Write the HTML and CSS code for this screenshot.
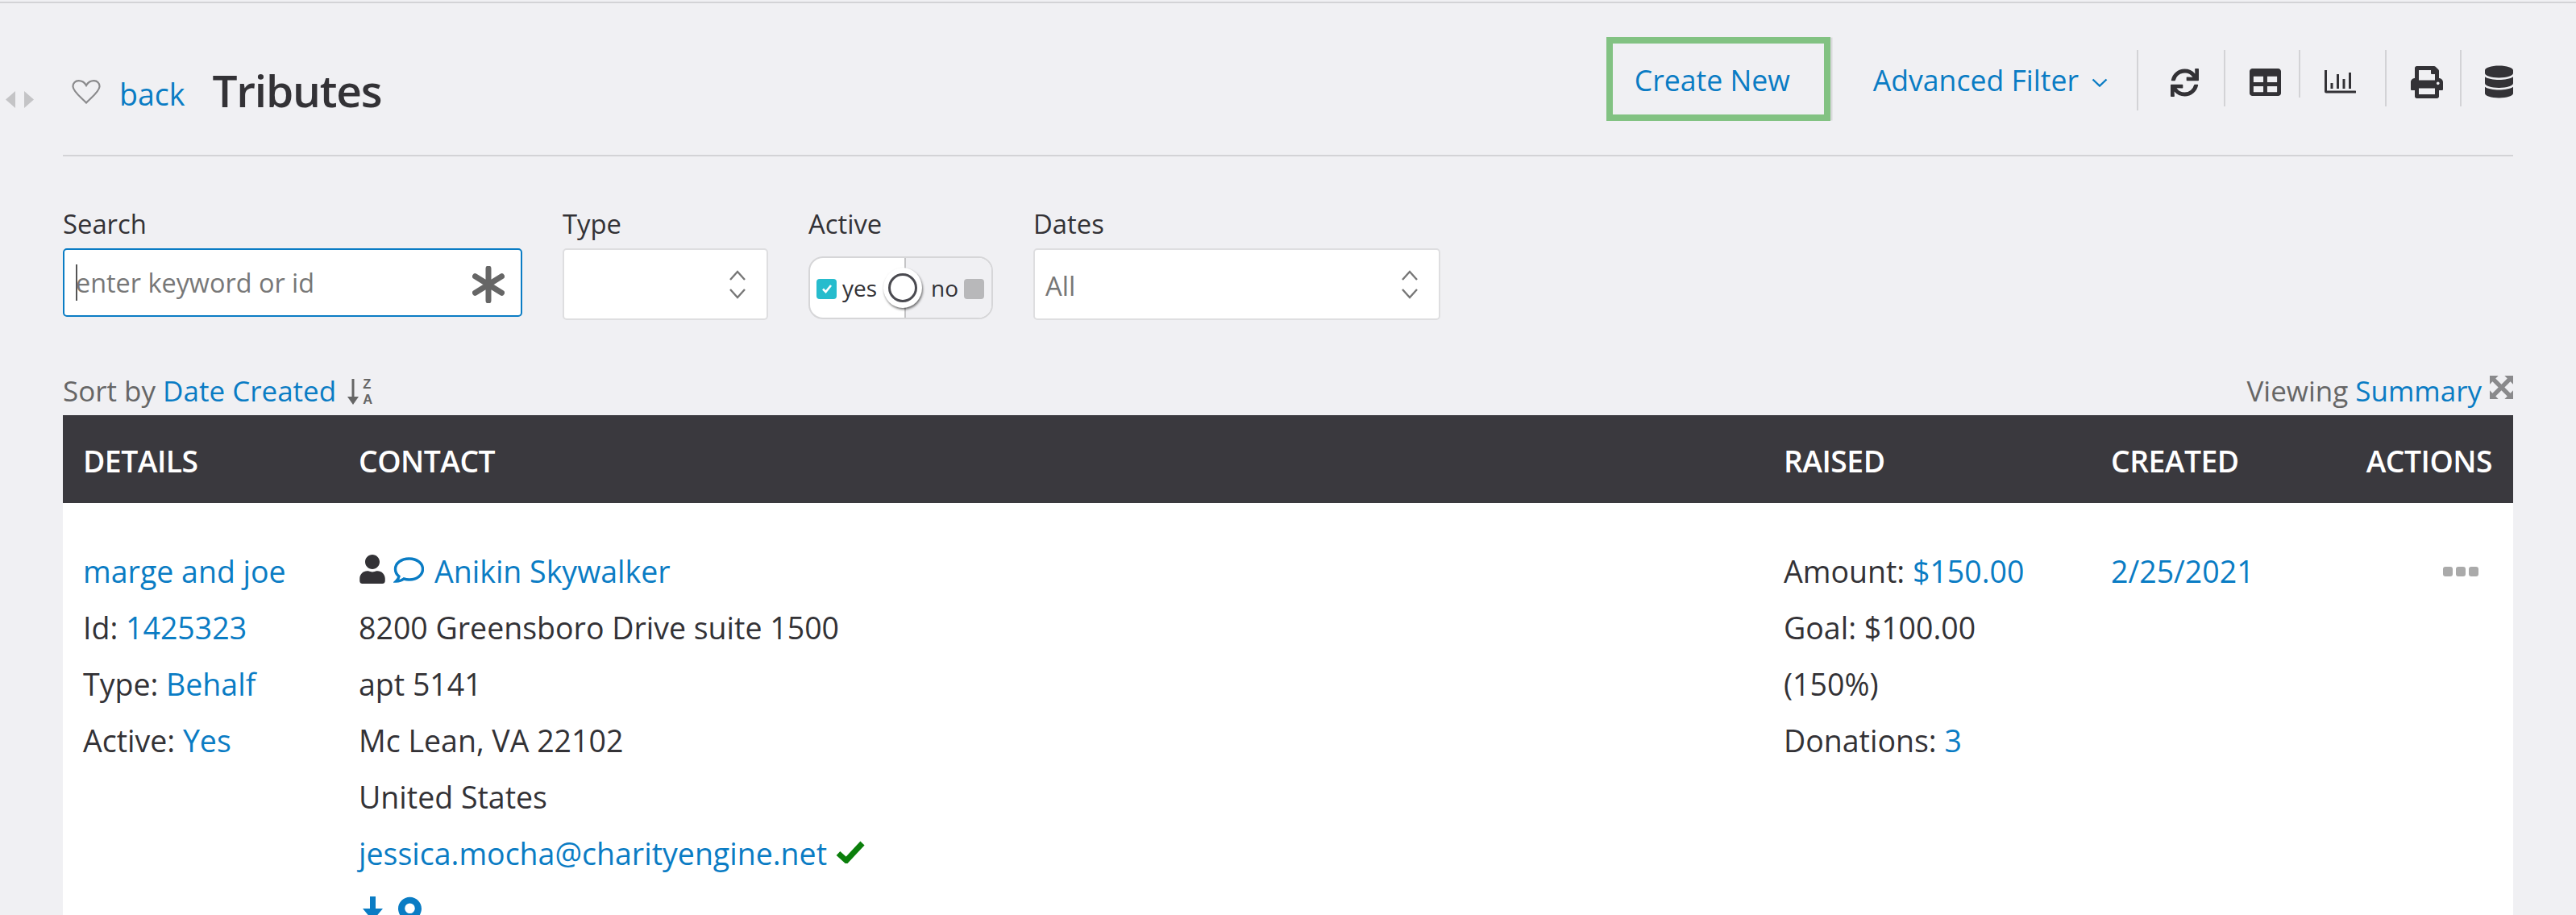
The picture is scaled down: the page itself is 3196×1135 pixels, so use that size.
FILE: index.html
```html
<!DOCTYPE html>
<html lang="en">
<head>
<meta charset="utf-8">
<title>Tributes</title>
<link rel="stylesheet" href="styles.css">
</head>
<body>
<div class="page">
  <aside class="rail">
    <svg class="rail-arrows" viewBox="0 0 35 21"><path d="M12 0v21L0 10.500z"/><path d="M23 0v21l12-10.500z"/></svg>
  </aside>
  <main class="main">
    <header class="head">
      <div class="head-left">
        <svg class="heart" viewBox="0 0 36 30"><path d="M18 28.500C12 22 2 15 1.500 8.500 1.200 4 4.500 1.200 8.500 1.200c4 0 7.500 2.300 9.500 5.800 2-3.500 5.500-5.800 9.500-5.800 4 0 7.300 2.800 7 7.300C34 15 24 22 18 28.500z"/></svg>
        <a class="link back">back</a>
        <h1 class="title">Tributes</h1>
      </div>
      <div class="head-right">
        <a class="link create">Create New</a>
        <a class="link advanced">Advanced Filter<svg class="adv-chevron" viewBox="0 0 20 11"><path d="M1.500 1.500 10 9.500l8.500-8"/></svg></a>
        <div class="tool tool-refresh">
          <svg class="ico-refresh" viewBox="0 0 512 512"><path d="M440.65 12.57l4 82.77A247.16 247.16 0 0 0 255.83 8C134.73 8 33.91 94.92 12.29 209.82A12 12 0 0 0 24.09 224h49.05a12 12 0 0 0 11.67-9.26 175.91 175.91 0 0 1 317-56.94l-101.46-4.86a12 12 0 0 0-12.57 12v47.41a12 12 0 0 0 12 12H500a12 12 0 0 0 12-12V12a12 12 0 0 0-12-12h-47.37a12 12 0 0 0-11.98 12.57zM255.83 432a175.61 175.61 0 0 1-146-77.8l101.8 4.87a12 12 0 0 0 12.57-12v-47.4a12 12 0 0 0-12-12H12a12 12 0 0 0-12 12V500a12 12 0 0 0 12 12h47.35a12 12 0 0 0 12-12.6l-4.15-82.57A247.17 247.17 0 0 0 255.83 504c121.11 0 221.93-86.92 243.55-201.82a12 12 0 0 0-11.8-14.18h-49.05a12 12 0 0 0-11.67 9.26A175.86 175.86 0 0 1 255.83 432z"/></svg>
        </div>
        <div class="tool tool-table">
          <svg class="ico-table" viewBox="0 32 512 448"><path d="M464 32H48C21.49 32 0 53.49 0 80v352c0 26.51 21.49 48 48 48h416c26.51 0 48-21.49 48-48V80c0-26.51-21.49-48-48-48zM224 416H64v-96h160v96zm0-160H64v-96h160v96zm224 160H288v-96h160v96zm0-160H288v-96h160v96z"/></svg>
        </div>
        <div class="tool tool-chart">
          <svg class="ico-chart" viewBox="0 0 40 30"><path d="M1 0v26.500a2 2 0 0 0 2 2h36a1.200 1.200 0 0 0 0-3H4V1a1.500 1.500 0 0 0-3-1zM8.500 16h3v7h-3zM16 5h3v18h-3zM23.500 11h3v12h-3zM31 3h3v20h-3z"/></svg>
        </div>
        <div class="tool tool-print">
          <svg class="ico-print" viewBox="0 0 512 512"><path d="M448 192V77.25c0-8.49-3.37-16.62-9.37-22.63L393.37 9.370c-6-6-14.14-9.370-22.63-9.370H96C78.330 0 64 14.330 64 32v160c-35.350 0-64 28.650-64 64v112c0 8.840 7.160 16 16 16h48v96c0 17.670 14.330 32 32 32h320c17.670 0 32-14.330 32-32v-96h48c8.840 0 16-7.160 16-16V256c0-35.350-28.650-64-64-64zm-64 256H128v-96h256v96zm0-224H128V64h192v48c0 8.840 7.160 16 16 16h48v96zm48 72c-13.250 0-24-10.750-24-24 0-13.260 10.750-24 24-24s24 10.740 24 24c0 13.250-10.750 24-24 24z"/></svg>
        </div>
        <div class="tool tool-db">
          <svg class="ico-db" viewBox="0 0 448 512"><path d="M448 73.143v45.714C448 159.143 347.667 192 224 192S0 159.143 0 118.857V73.143C0 32.857 100.333 0 224 0s224 32.857 224 73.143zM448 176v102.857C448 319.143 347.667 352 224 352S0 319.143 0 278.857V176c48.125 33.143 136.208 48.572 224 48.572S399.874 209.143 448 176zm0 160v102.857C448 479.143 347.667 512 224 512S0 479.143 0 438.857V336c48.125 33.143 136.208 48.572 224 48.572S399.874 369.143 448 336z"/></svg>
        </div>
      </div>
    </header>

    <section class="filters">
      <div class="field field-search">
        <label class="label">Search</label>
        <div class="search-box">
          <span class="caret"></span>
          <input class="search-input" type="text" placeholder="enter keyword or id">
          <svg class="asterisk" viewBox="0 0 40 46"><path d="M20 3v40M3.500 12.800l33 20.400M36.500 12.800l-33 20.400"/></svg>
        </div>
      </div>
      <div class="field field-type">
        <label class="label">Type</label>
        <div class="select">
          <span class="select-value"></span>
          <svg class="updown" viewBox="0 0 20 36"><path d="M1 12 10 2l9 10M1 24l9 10 9-10"/></svg>
        </div>
      </div>
      <div class="field field-active">
        <label class="label">Active</label>
        <div class="toggle">
          <div class="toggle-half toggle-yes">
            <span class="tick"><svg class="tick-mark" viewBox="0 0 14 12"><path d="M2 6.500 5.500 10 12 2"/></svg></span>
            <span>yes</span>
          </div>
          <div class="toggle-half toggle-no">
            <span>no</span>
            <span class="untick"></span>
          </div>
          <span class="knob"><span class="knob-ring"></span></span>
        </div>
      </div>
      <div class="field field-dates">
        <label class="label">Dates</label>
        <div class="select">
          <span class="select-value">All</span>
          <svg class="updown" viewBox="0 0 20 36"><path d="M1 12 10 2l9 10M1 24l9 10 9-10"/></svg>
        </div>
      </div>
    </section>

    <section class="sortbar">
      <div class="sort-left">
        <span>Sort by</span>
        <a class="link">Date Created</a>
        <span class="sort-icon">
          <svg class="sort-arrow" viewBox="0 0 14 32"><path d="M5.500 0h3v22H14l-7 10-7-10h5.500z"/></svg>
          <span class="sort-letters"><span>Z</span><span>A</span></span>
        </span>
      </div>
      <div class="sort-right">
        <span>Viewing</span>
        <a class="link">Summary</a>
        <svg class="expand" viewBox="0 0 30 30"><path d="M0 0h11L7.500 3.500 15 11l7.500-7.500L19 0h11v11l-3.500-3.500L19 15l7.500 7.500L30 19v11H19l3.500-3.500L15 19l-7.500 7.500L11 30H0V19l3.500 3.500L11 15 3.500 7.500 0 11z"/></svg>
      </div>
    </section>

    <table class="grid">
      <colgroup>
        <col class="col-details"><col class="col-contact"><col class="col-raised"><col class="col-created"><col class="col-actions">
      </colgroup>
      <thead>
        <tr><th>DETAILS</th><th>CONTACT</th><th>RAISED</th><th>CREATED</th><th class="th-actions">ACTIONS</th></tr>
      </thead>
      <tbody>
        <tr>
          <td>
            <div class="line"><a class="link">marge and joe</a></div>
            <div class="line">Id: <a class="link">1425323</a></div>
            <div class="line">Type: <a class="link">Behalf</a></div>
            <div class="line">Active: <a class="link">Yes</a></div>
          </td>
          <td>
            <div class="line line-name">
              <svg class="ico-user" viewBox="0 0 448 512"><path d="M224 256c70.700 0 128-57.300 128-128S294.700 0 224 0 96 57.300 96 128s57.300 128 128 128zm89.600 32h-16.700c-22.200 10.200-46.900 16-72.900 16s-50.600-5.800-72.900-16h-16.700C60.200 288 0 348.200 0 422.400V464c0 26.500 21.500 48 48 48h352c26.500 0 48-21.500 48-48v-41.600c0-74.200-60.200-134.400-134.400-134.400z"/></svg>
              <svg class="ico-bubble" viewBox="0 0 38 32"><path d="M19.500 2C10 2 2.500 7.500 2.500 15c0 3.500 1.800 6.800 4.500 9-.3 2-1.500 4-3.500 6 3.500 0 7-1 9.500-3 2 .6 4.300 1 6.500 1 9.500 0 17-5.500 17-13S29 2 19.500 2z"/></svg>
              <a class="link">Anikin Skywalker</a>
            </div>
            <div class="line">8200 Greensboro Drive suite 1500</div>
            <div class="line">apt 5141</div>
            <div class="line">Mc Lean, VA 22102</div>
            <div class="line">United States</div>
            <div class="line line-email">
              <a class="link">jessica.mocha@charityengine.net</a>
              <svg class="ico-check" viewBox="0 0 36 28"><path d="M3 15.500 13 24.500 33 3"/></svg>
            </div>
            <div class="line line-tools">
              <svg class="ico-down" viewBox="0 0 25 30"><path d="M9 0h7v15h9L12.500 30 0 15h9z"/></svg>
              <svg class="ico-pin" viewBox="0 0 30 40"><path d="M15 0C6.700 0 0 6.700 0 15c0 8 9 19 15 25 6-6 15-17 15-25C30 6.700 23.300 0 15 0zm0 21a6.500 6.500 0 1 1 0-13 6.500 6.500 0 0 1 0 13z"/></svg>
            </div>
          </td>
          <td>
            <div class="line">Amount: <a class="link">$150.00</a></div>
            <div class="line">Goal: $100.00</div>
            <div class="line">(150%)</div>
            <div class="line">Donations: <a class="link">3</a></div>
          </td>
          <td>
            <div class="line"><a class="link">2/25/2021</a></div>
          </td>
          <td class="td-actions">
            <div class="line dots"><span class="dot"></span><span class="dot"></span><span class="dot"></span></div>
          </td>
        </tr>
      </tbody>
    </table>
  </main>
</div>
</body>
</html>
```
FILE: styles.css
```css
* { box-sizing: border-box; }
html, body { margin: 0; height: 100%; overflow: hidden; }
body {
  background: #f0f0f3;
  color: #333236;
  font-family: "Open Sans", "Liberation Sans", sans-serif;
  font-size: 37.5px;
}
a { cursor: pointer; }
.link { color: #0a7cc4; }

.page { display: flex; height: 1135px; margin-top: 2px; border-top: 2px solid #d3d3d6; }
.rail { flex: 0 0 78px; padding: 109px 0 0 7px; }
.rail-arrows { display: block; width: 35px; height: 21px; fill: #c4c4c6; }
.main { flex: 1 1 auto; min-width: 0; margin-right: 78px; }

/* header */
.head { display: flex; justify-content: space-between; height: 190px; border-bottom: 2px solid #d3d3d6; }
.head-left { display: flex; align-items: flex-start; padding: 68px 0 0 11px; }
.heart { width: 36px; height: 30px; margin: 27px 23px 0 0; fill: none; stroke: #8a8a8c; stroke-width: 2.200; }
.back { line-height: 76px; padding-top: 7px; margin-right: 34px; }
.title { margin: 0; padding-top: 2px; font-size: 55px; font-weight: 600; letter-spacing: -1.2px; line-height: 76px; color: #333236; }

.head-right { display: flex; align-items: flex-start; font-size: 35.6px; }
.create {
  display: flex; align-items: center;
  width: 278px; height: 104px; margin-top: 42px; padding: 2px 0 0 27px;
  border: 8px solid #82c282;
  box-shadow: 3px 0 0 -0.5px #d8d8da;
}
.advanced { display: flex; align-items: center; height: 104px; margin: 42px 36px 0 53px; padding-top: 2px; }
.adv-chevron { width: 20px; height: 11px; margin: 7px 0 0 16px; fill: none; stroke: #0a7cc4; stroke-width: 2.400; }

.tool { margin-top: 58px; border-left: 2px solid #d3d3d6; height: 70px; fill: #333236; }
.tool svg { display: block; }
.tool-refresh { width: 108px; height: 75px; padding: 23px 0 0 40px; }
.tool-table { width: 93px; padding: 22px 0 0 30px; }
.tool-chart { width: 107px; height: 59px; padding: 25px 0 0 29px; }
.tool-print { width: 93px; padding: 20px 0 0 30px; }
.tool-db { width: 66px; padding: 19px 0 0 29px; }
.ico-refresh { width: 35px; height: 35px; }
.ico-table { width: 39px; height: 36px; }
.ico-chart { width: 40px; height: 30px; }
.ico-print { width: 40px; height: 40px; }
.ico-db { width: 35px; height: 41px; }

/* filters */
.filters { display: flex; gap: 50px; padding-top: 64px; font-size: 32.8px; }
.label { display: block; height: 50px; line-height: 40px; }
.field-search { width: 570px; }
.field-type { width: 255px; }
.field-active { width: 229px; }
.field-dates { width: 505px; }

.search-box {
  display: flex; align-items: center;
  height: 85px; padding: 0 20px 0 14px;
  background: #fff; border: 2px solid #0a7cc4; border-radius: 5px;
}
.caret { flex: none; width: 2px; height: 45px; background: #555; }
.search-input {
  flex: 1 1 auto; min-width: 0; height: 60px; padding: 0 0 2px;
  border: 0; outline: 0; background: transparent;
  font: inherit; font-size: 32.4px; color: #333; margin-left: -2px;
}
.search-input::placeholder { color: #777; opacity: 1; }
.asterisk { flex: none; width: 40px; height: 46px; margin-top: 4px; fill: none; stroke: #666; stroke-width: 7; stroke-linecap: round; }

.select {
  display: flex; align-items: center; justify-content: space-between;
  height: 89px; padding: 4px 26px 0 13px;
  background: #fff; border: 2px solid #dedee0; border-radius: 5px;
  color: #777;
}
.updown { width: 20px; height: 36px; margin-top: -4px; fill: none; stroke: #777; stroke-width: 2.400; }

.toggle {
  position: relative; display: flex;
  height: 78px; margin-top: 10px;
  background: #fff; border: 2px solid #d6d6d8; border-radius: 18px;
  font-size: 28px; color: #333236; overflow: visible;
}
.toggle-half { display: flex; align-items: center; height: 100%; }
.toggle-yes { width: 119px; gap: 7px; padding: 0 0 0 8px; border-right: 2px solid #c4c4c6; }
.toggle-no { flex: 1; gap: 7px; padding: 0 0 0 31px; background: #f0f0f3; border-radius: 0 16px 16px 0; }
.tick {
  display: flex; align-items: center; justify-content: center;
  width: 25px; height: 25px; margin-top: 2px;
  background: #26bccd; border-radius: 4px;
}
.tick-mark { width: 14px; height: 12px; fill: none; stroke: #fff; stroke-width: 2.600; }
.untick { width: 25px; height: 25px; margin-top: 2px; background: #b8b8ba; border-radius: 4px; }
.knob {
  position: absolute; left: 91px; top: 12px;
  display: flex; align-items: center; justify-content: center;
  width: 48px; height: 50px;
  background: #fff; border-radius: 50%;
  box-shadow: 1px 2px 3px rgba(0,0,0,.55);
}
.knob-ring { width: 36px; height: 36px; border: 3px solid #4a4a50; border-radius: 50%; }

/* sort bar */
.sortbar { display: flex; justify-content: space-between; margin-top: 68px; height: 50px; font-size: 35px; line-height: 40px; color: #666; }
.sort-left, .sort-right { display: flex; gap: 9px; height: 40px; }
.sort-icon { display: flex; gap: 5px; margin-left: 5px; padding-top: 5px; }
.sort-arrow { width: 14px; height: 32px; fill: #666; }
.sort-letters {
  display: flex; flex-direction: column; width: 14px; margin-top: -3px;
  font-family: "Liberation Sans", sans-serif; font-size: 16.5px; line-height: 19px; font-weight: 700;
}
.expand { width: 29px; height: 29px; margin: 1px 0 0 1px; fill: #8a8a8c; }

/* table */
.grid { width: 100%; table-layout: fixed; border-collapse: collapse; background: #fff; }
.col-details { width: 342px; }
.col-contact { width: 1768px; }
.col-raised { width: 406px; }
.col-created { width: 300px; }
.grid th {
  height: 109px; padding: 4px 0 0 25px;
  background: #3a393e; color: #fff;
  font-size: 37.3px; font-weight: 600; text-align: left; letter-spacing: -0.5px;
}
.grid .th-actions { padding: 4px 26px 0 0; text-align: right; }
.grid td { vertical-align: top; padding: 50px 0 0 25px; }
.grid .td-actions { padding-left: 0; }
.line { height: 70px; line-height: 70px; white-space: nowrap; }
.line-name { display: flex; align-items: center; }
.ico-user { width: 32px; height: 36px; margin: -6px 10px 0 1px; fill: #333236; }
.ico-bubble { width: 38px; height: 32px; margin: -4px 13px 0 0; fill: none; stroke: #0a7cc4; stroke-width: 3.400; }
.line-email { display: flex; align-items: center; gap: 11px; }
.ico-check { width: 36px; height: 28px; margin-top: -4px; fill: none; stroke: #0b7f0b; stroke-width: 7; }
.line-tools { display: flex; gap: 19px; padding: 18px 0 0 5px; }
.ico-down { width: 25px; height: 30px; fill: #0a7cc4; }
.ico-pin { width: 29px; height: 40px; fill: #0a7cc4; }
.dots { display: flex; justify-content: flex-end; align-items: center; gap: 4px; padding: 0 43px 0 0; }
.dot { width: 12px; height: 12px; background: #aaa; border-radius: 3px; }
```
